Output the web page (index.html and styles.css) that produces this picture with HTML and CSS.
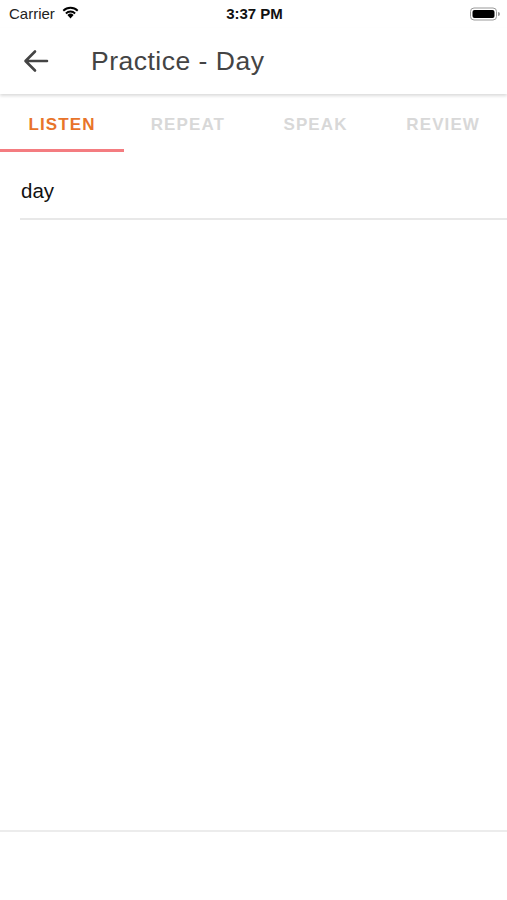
FILE: index.html
```html
<!DOCTYPE html>
<html>
<head>
<meta charset="utf-8">
<link rel="stylesheet" href="styles.css">
</head>
<body>
<div class="screen">
  <div class="status">
    <div class="status-left">
      <span class="carrier">Carrier</span>
      <svg class="wifi" width="19" height="14" viewBox="0 0 17 13">
        <path d="M8.5 12.5 L5.6 9.3 A4.2 4.2 0 0 1 11.4 9.3 Z" fill="#000"/>
        <path d="M3.6 7.2 A7 7 0 0 1 13.4 7.2 L12.2 8.5 A5.3 5.3 0 0 0 4.8 8.5 Z" fill="#000"/>
        <path d="M1.2 4.7 A10.4 10.4 0 0 1 15.8 4.7 L14.6 6 A8.7 8.7 0 0 0 2.4 6 Z" fill="#000"/>
      </svg>
    </div>
    <div class="time">3:37 PM</div>
    <div class="status-right">
      <svg width="30" height="14" viewBox="0 0 30 14">
        <rect x="0.5" y="1" width="26" height="12" rx="3.5" fill="none" stroke="#999" stroke-width="1"/>
        <rect x="2.5" y="3" width="22" height="8" rx="2" fill="#000"/>
        <path d="M28 5 v4 a2 2 0 0 0 0 -4z" fill="#999"/>
      </svg>
    </div>
  </div>
  <div class="appbar">
    <button class="back">
      <svg width="26" height="24" viewBox="0 0 26 24">
        <path d="M24 12 H3 M12 2.5 L2.5 12 L12 21.5" fill="none" stroke="#444" stroke-width="2.6" stroke-linecap="round" stroke-linejoin="round"/>
      </svg>
    </button>
    <h1 class="title">Practice - Day</h1>
  </div>
  <div class="tabs">
    <div class="tab active">LISTEN</div>
    <div class="tab">REPEAT</div>
    <div class="tab">SPEAK</div>
    <div class="tab">REVIEW</div>
  </div>
  <div class="content">
    <div class="row">day</div>
  </div>
  <div class="footer"></div>
</div>
</body>
</html>
```
FILE: styles.css
```css
* { box-sizing: border-box; }
html, body { margin: 0; padding: 0; background: #fff; }
body { font-family: "Liberation Sans", Arial, sans-serif; }
.screen { width: 507px; height: 900px; display: flex; flex-direction: column; }
.status { height: 28px; display: flex; align-items: center; justify-content: space-between; padding: 0 7px 1px 9px; position: relative; }
.status-left { display: flex; align-items: center; gap: 6px; width: 120px; }
.carrier { font-size: 15px; color: #222; }
.wifi { margin-top: -3px; }
.time { font-size: 15px; font-weight: bold; color: #111; }
.status-right { width: 120px; display: flex; justify-content: flex-end; }
.appbar { height: 66px; display: flex; align-items: center; box-shadow: 0 2px 3px rgba(0,0,0,0.14); position: relative; z-index: 1; }
.back { border: 0; background: none; padding: 0; margin-left: 23px; width: 26px; height: 24px; display: flex; }
.title { margin: 0 0 0 42px; font-size: 26.5px; font-weight: normal; color: #444; letter-spacing: 0.5px; }
.tabs { display: flex; height: 58px; }
.tab { flex: 1; display: flex; align-items: center; justify-content: center; font-size: 17px; font-weight: bold; color: #d8d8d8; letter-spacing: 1.1px; padding-top: 6px; border-bottom: 3px solid transparent; }
.tab.active { color: #e8742a; border-bottom-color: #f47c80; }
.tab:first-child { flex: 0 0 124px; }
.content { flex: 1; padding-left: 20px; }
.row { height: 68px; display: flex; align-items: center; padding-left: 1px; padding-top: 11px; font-size: 20.5px; color: #111; border-bottom: 2px solid #e8e8e8; }
.footer { height: 70px; border-top: 2px solid #ececec; }
```
